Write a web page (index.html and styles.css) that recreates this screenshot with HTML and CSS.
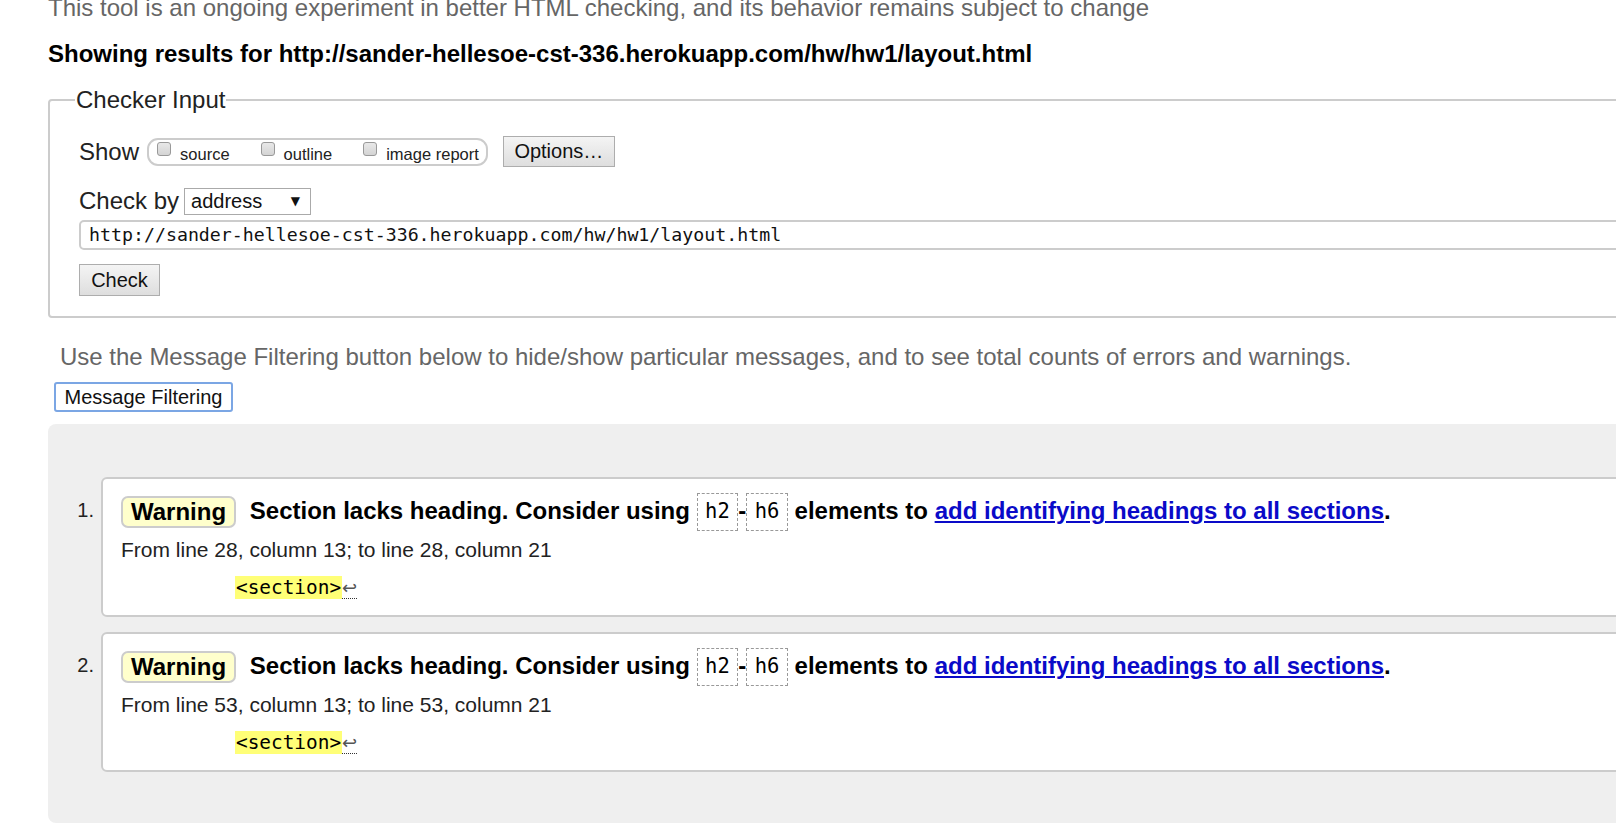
FILE: index.html
```html
<!DOCTYPE html>
<html lang="en">
<head>
<meta charset="utf-8">
<title>Nu Html Checker</title>
<link rel="stylesheet" href="styles.css">
</head>
<body>
<div class="page">
  <p class="intro">This tool is an ongoing experiment in better HTML checking, and its behavior remains subject to change</p>
  <h2 class="showing">Showing results for http://sander-hellesoe-cst-336.herokuapp.com/hw/hw1/layout.html</h2>
  <fieldset class="checker">
    <legend>Checker Input</legend>
    <div class="row row-show">
      <span class="label">Show</span>
      <span class="group">
        <span class="opt"><span class="cb"></span><span class="opt-label">source</span></span>
        <span class="opt"><span class="cb"></span><span class="opt-label">outline</span></span>
        <span class="opt"><span class="cb"></span><span class="opt-label">image report</span></span>
      </span>
      <span class="btn btn-options">Options…</span>
    </div>
    <div class="row row-by">
      <span class="label">Check by</span>
      <span class="select"><span>address</span><span class="arrow">▼</span></span>
    </div>
    <div class="url">http://sander-hellesoe-cst-336.herokuapp.com/hw/hw1/layout.html</div>
    <span class="btn btn-check">Check</span>
  </fieldset>
  <p class="hint">Use the Message Filtering button below to hide/show particular messages, and to see total counts of errors and warnings.</p>
  <span class="btn-filter">Message Filtering</span>
  <div class="results">
    <ol class="messages">
      <li class="msg">
        <span class="num">1.</span>
        <div class="card">
          <p class="line1"><strong class="badge">Warning</strong> <span class="text">Section lacks heading. Consider using <code class="tag">h2</code>-<code class="tag">h6</code> elements to <a href="#">add identifying headings to all sections</a>.</span></p>
          <p class="loc">From line 28, column 13; to line 28, column 21</p>
          <p class="extract"><code><b class="hl">&lt;section&gt;</b><span class="lf">↩</span></code></p>
        </div>
      </li>
      <li class="msg">
        <span class="num">2.</span>
        <div class="card">
          <p class="line1"><strong class="badge">Warning</strong> <span class="text">Section lacks heading. Consider using <code class="tag">h2</code>-<code class="tag">h6</code> elements to <a href="#">add identifying headings to all sections</a>.</span></p>
          <p class="loc">From line 53, column 13; to line 53, column 21</p>
          <p class="extract"><code><b class="hl">&lt;section&gt;</b><span class="lf">↩</span></code></p>
        </div>
      </li>
    </ol>
  </div>
</div>
</body>
</html>
```

FILE: styles.css
```css
html, body {
  margin: 0;
  padding: 0;
  overflow: hidden;
  background: #fff;
}
body {
  font-family: "Liberation Sans", Arial, sans-serif;
  color: #000;
}
.page {
  width: 1700px;
  padding-left: 48px;
  margin-top: -6px;
}
.intro {
  margin: 0;
  font-size: 24px;
  line-height: 28px;
  color: #666;
}
.showing {
  margin: 18px 0 0;
  font-size: 24px;
  line-height: 28px;
  font-weight: bold;
}
.checker {
  margin: 18px 0 0;
  padding: 22px 29px 20px;
  border: 2px solid #ccc;
  border-radius: 4px;
  box-sizing: border-box;
  width: 1620px;
}
.checker legend {
  font-size: 24px;
  line-height: 28px;
  padding: 0 1px;
  margin-left: -4px;
  color: #222;
}
.row {
  display: flex;
  align-items: center;
}
.label {
  font-size: 24px;
  color: #222;
}
.row-show {
  height: 31px;
}
.group {
  display: flex;
  align-items: flex-start;
  height: 28px;
  box-sizing: border-box;
  border: 2px solid #ccc;
  border-radius: 11px;
  margin-left: 8px;
  padding: 0 7px 0 8px;
}
.opt {
  display: flex;
  align-items: flex-start;
  margin-right: 31px;
}
.opt:last-child {
  margin-right: 0;
}
.cb {
  width: 12px;
  height: 12px;
  margin-top: 2px;
  border: 1px solid #999;
  border-radius: 3px;
  background: linear-gradient(#e8e8e8, #d4d4d4);
}
.opt-label {
  font-size: 16.5px;
  line-height: 20px;
  margin-top: 4px;
  margin-left: 9px;
  color: #222;
}
.btn {
  display: inline-flex;
  align-items: center;
  justify-content: center;
  box-sizing: border-box;
  font-size: 20px;
  color: #111;
  border: 1px solid #adadad;
  background: linear-gradient(#f4f4f4, #dedede);
}
.btn-options {
  width: 112px;
  height: 31px;
  margin-left: 15px;
}
.row-by {
  margin-top: 20px;
  height: 28px;
}
.select {
  display: inline-flex;
  align-items: center;
  justify-content: space-between;
  box-sizing: border-box;
  width: 127px;
  height: 27px;
  margin-left: 5px;
  padding: 0 10px 0 6px;
  border: 1px solid #aaa;
  font-size: 20px;
  color: #111;
  background: #fff;
}
.select .arrow {
  font-size: 12px;
  font-family: "DejaVu Sans", sans-serif;
}
.url {
  margin-top: 5px;
  height: 30px;
  box-sizing: border-box;
  border: 2px solid #ccc;
  border-radius: 5px;
  padding: 0 0 0 8px;
  font-family: "DejaVu Sans Mono", "Liberation Mono", monospace;
  font-size: 18.25px;
  line-height: 26px;
  color: #111;
  width: 1600px;
}
.btn-check {
  margin-top: 14px;
  width: 81px;
  height: 32px;
}
.hint {
  margin: 25px 0 0 12px;
  font-size: 24px;
  line-height: 28px;
  color: #666;
}
.btn-filter {
  display: inline-flex;
  align-items: center;
  justify-content: center;
  box-sizing: border-box;
  margin: 11px 0 0 6px;
  width: 179px;
  height: 30px;
  font-size: 20px;
  color: #111;
  background: #fff;
  border: 2px solid #7ba6e4;
  border-radius: 3px;
}
.results {
  margin-top: 12px;
  background: #efefef;
  border-radius: 8px;
  padding: 53px 0 51px;
}
.messages {
  list-style: none;
  margin: 0;
  padding: 0;
}
.msg {
  display: flex;
  align-items: flex-start;
}
.msg + .msg {
  margin-top: 15px;
}
.num {
  width: 53px;
  box-sizing: border-box;
  padding: 21px 7px 0 0;
  text-align: right;
  font-size: 20px;
  line-height: 24px;
  color: #222;
}
.card {
  flex: 1;
  height: 140px;
  box-sizing: border-box;
  background: #fff;
  border: 2px solid #ccc;
  border-radius: 6px;
  padding: 12px 0 0 18px;
}
.line1 {
  margin: 0;
  font-size: 24px;
  line-height: 38px;
  font-weight: bold;
}
.badge {
  display: inline-block;
  vertical-align: middle;
  box-sizing: border-box;
  height: 32px;
  line-height: 28px;
  padding: 0 8px;
  margin-right: 7px;
  background: #ffffcc;
  border: 2px solid #ccc;
  border-radius: 7px;
}
.text {
  vertical-align: middle;
}
.tag {
  display: inline-block;
  vertical-align: middle;
  box-sizing: border-box;
  height: 38px;
  line-height: 34px;
  padding: 0 7.5px;
  border: 1.5px dashed #999;
  font-family: "DejaVu Sans Mono", monospace;
  font-weight: normal;
  font-size: 20.5px;
}
.line1 a {
  color: #0a0ac8;
  text-decoration: underline;
}
.loc {
  margin: 7px 0 0;
  font-size: 21px;
  line-height: 24px;
  color: #222;
}
.extract {
  margin: 14px 0 0 114px;
  line-height: 24px;
}
.extract code {
  font-family: "DejaVu Sans Mono", monospace;
  font-size: 19.4px;
}
.hl {
  font-weight: normal;
  background: #ffff77;
  padding: 0 1px;
}
.lf {
  font-family: "DejaVu Sans", sans-serif;
  font-size: 18px;
  color: #555;
  border-bottom: 1px dotted #333;
}
```
